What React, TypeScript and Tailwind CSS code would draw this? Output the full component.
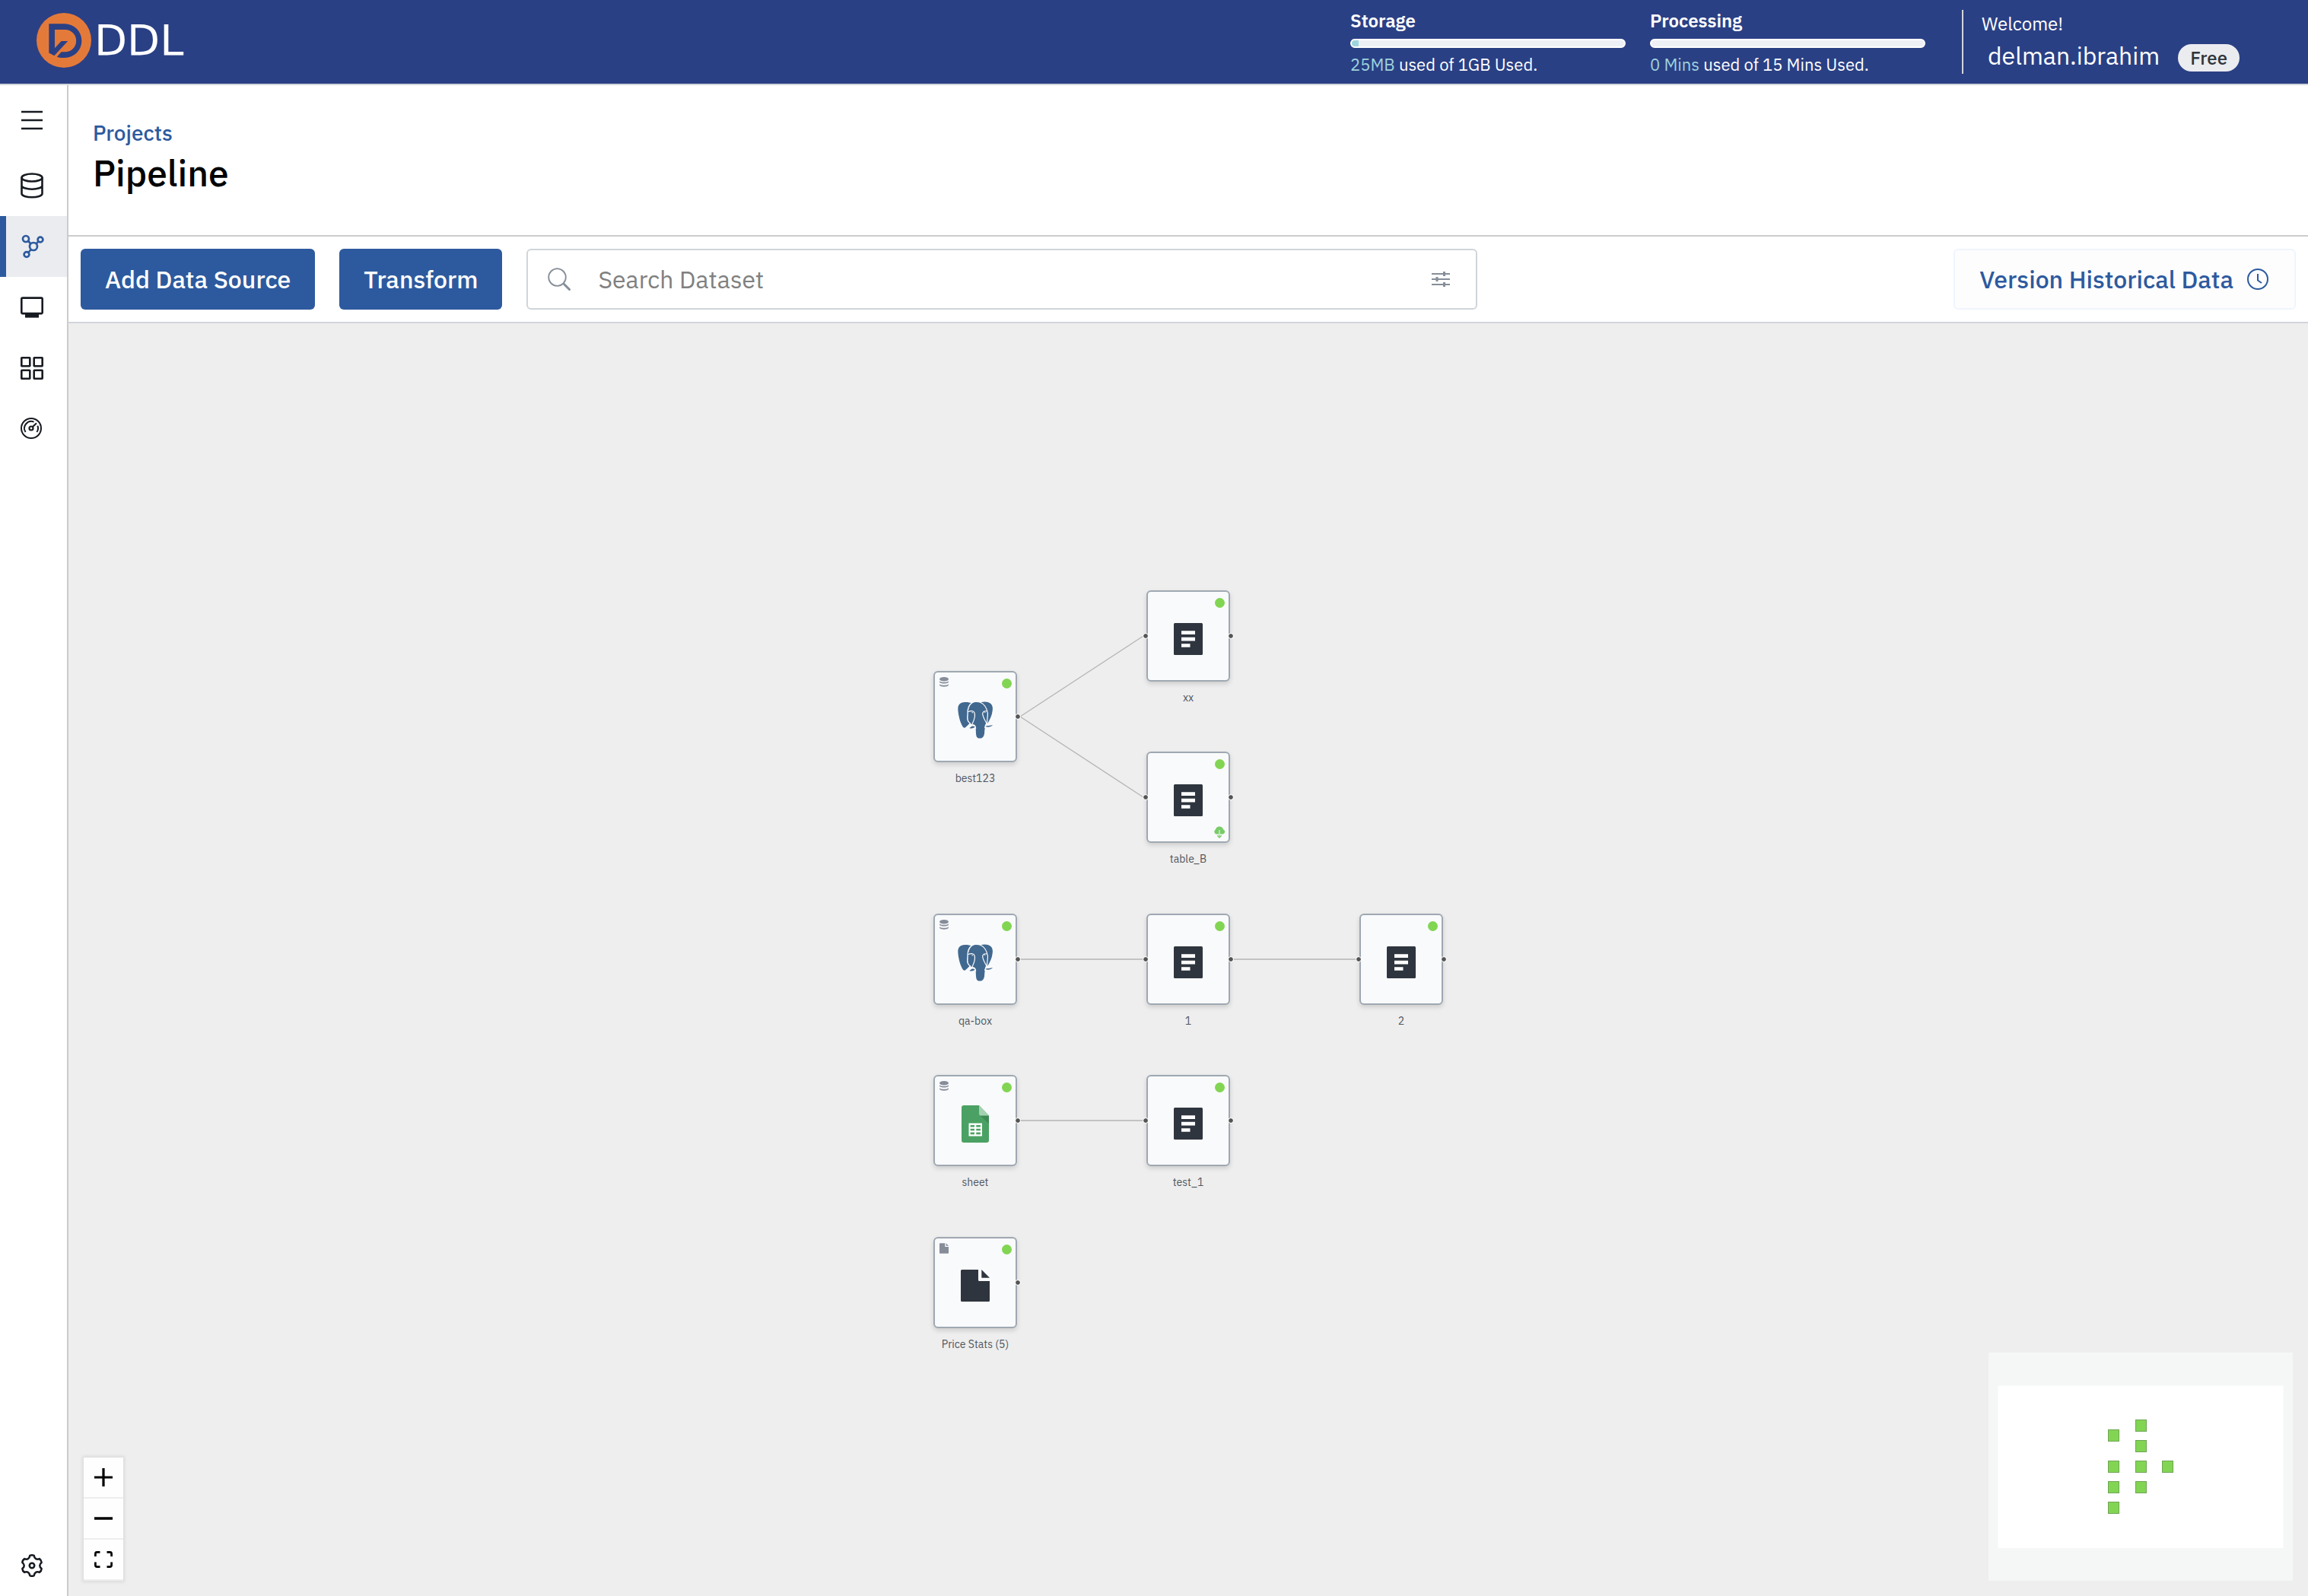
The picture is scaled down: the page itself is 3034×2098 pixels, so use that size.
import React from "react";

type IconProps = { className?: string };

/* ---------- Brand ---------- */

function Logo() {
  return (
    <a href="#home" className="mb-1 flex items-center gap-1" aria-label="DDL home">
      <svg viewBox="0 0 72 72" className="size-[72px]" aria-hidden="true">
        <circle cx="36" cy="36" r="36" fill="#e47a3a" />
        <path
          d="M16.300 14.300H37A22.300 22.300 0 0 1 37 59C32.500 59.200 29.500 58.900 26.800 57.700L32.600 51.300H37.500A14.600 14.600 0 0 0 37.500 22H24V46.200L32.600 37H41.200L23.300 56.300L16.300 52.500Z"
          fill="#2a4085"
        />
      </svg>
      <span className="font-['DejaVu_Sans',sans-serif] text-[56px] leading-none text-white">DDL</span>
    </a>
  );
}

/* ---------- Icons ---------- */

function MenuIcon() {
  return (
    <svg viewBox="0 0 28 28" className="size-7" stroke="#171b21" strokeWidth="2.6" aria-hidden="true">
      <path d="M0 3H28M0 14H28M0 25H28" />
    </svg>
  );
}

function DatabaseIcon() {
  return (
    <svg viewBox="0 0 30 34" className="h-[34px] w-[30px]" fill="none" stroke="#171b21" strokeWidth="2.6" aria-hidden="true">
      <ellipse cx="15" cy="6.500" rx="13.500" ry="5" />
      <path d="M1.500 6.500V27.500C1.500 30.200 7.500 32.300 15 32.300S28.500 30.200 28.500 27.500V6.500M1.500 17C1.500 19.600 7.500 21.700 15 21.700S28.500 19.600 28.500 17" />
    </svg>
  );
}

function NetworkIcon() {
  return (
    <svg viewBox="0 0 30 32" className="h-8 w-[30px]" fill="none" stroke="#2d5a9e" strokeWidth="2.700" aria-hidden="true">
      <circle cx="6" cy="6" r="4" />
      <circle cx="25" cy="7" r="3.400" />
      <circle cx="16" cy="16" r="5" />
      <circle cx="7" cy="26.500" r="3.400" />
      <path d="M9 8.600L12.400 12.500M22.500 9.300L19.500 12.500M9.300 24L12.700 20" />
    </svg>
  );
}

function MonitorIcon() {
  return (
    <svg viewBox="0 0 30 28" className="h-7 w-[30px]" aria-hidden="true">
      <rect x="1.300" y="1.600" width="27.400" height="20.500" rx="1.500" fill="none" stroke="#171b21" strokeWidth="2.600" />
      <path d="M6 23H24V27.600H6Z" fill="#171b21" />
    </svg>
  );
}

function GridIcon() {
  return (
    <svg viewBox="0 0 30 30" className="size-[30px]" fill="none" stroke="#171b21" strokeWidth="2.600" aria-hidden="true">
      <rect x="1.300" y="1.300" width="11" height="11" rx="0.500" />
      <rect x="17.700" y="1.300" width="11" height="11" rx="0.500" />
      <rect x="1.300" y="17.700" width="11" height="11" rx="0.500" />
      <rect x="17.700" y="17.700" width="11" height="11" rx="0.500" />
    </svg>
  );
}

function GaugeIcon() {
  return (
    <svg viewBox="1 1 30 30" className="size-[30px]" fill="none" stroke="#171b21" strokeWidth="2" aria-hidden="true">
      <circle cx="15" cy="15" r="13" />
      <circle cx="15" cy="15" r="2.500" strokeWidth="2.200" />
      <path d="M17 13L22 8.300" strokeWidth="2.200" />
      <path d="M7.600 20A9 9 0 0 1 18.600 6.700M23.400 11.600A9 9 0 0 1 22.400 20" />
    </svg>
  );
}

function gearOutline(cx: number, cy: number) {
  const point = (radius: number, degrees: number) => {
    const a = (degrees * Math.PI) / 180;
    return `${(cx + radius * Math.cos(a)).toFixed(2)} ${(cy + radius * Math.sin(a)).toFixed(2)}`;
  };
  let d = `M${point(13.3, -102)}`;
  for (let i = 0; i < 6; i++) {
    const mid = -90 + i * 60;
    d += `Q${point(14.4, mid)} ${point(13.3, mid + 12)}`;
    d += `C${point(9.6, mid + 20)} ${point(9.6, mid + 40)} ${point(13.3, mid + 48)}`;
  }
  return d + "Z";
}

function SettingsIcon() {
  return (
    <svg viewBox="0 0 30 30" className="size-[30px]" fill="none" stroke="#171b21" strokeLinejoin="round" aria-hidden="true">
      <path d={gearOutline(15, 15)} strokeWidth="2.500" />
      <circle cx="15" cy="15" r="3.200" strokeWidth="2.600" />
    </svg>
  );
}

function SearchIcon() {
  return (
    <svg viewBox="0 0 30 30" className="size-[30px]" fill="none" stroke="#868e99" strokeLinecap="round" aria-hidden="true">
      <circle cx="12.500" cy="12.500" r="11.300" strokeWidth="1.800" />
      <path d="M21.500 21.500L28.500 28.500" strokeWidth="3" />
    </svg>
  );
}

function FilterIcon() {
  return (
    <svg viewBox="0 0 24 20" className="h-5 w-6" stroke="#868e99" strokeWidth="2" aria-hidden="true">
      <path d="M0 3H24M0 10H24M0 17H24" />
      <path d="M16.500 0V6M7 7V13M16.500 14V20" strokeWidth="3" />
    </svg>
  );
}

function ClockIcon() {
  return (
    <svg viewBox="0 0 28 28" className="size-7" fill="none" stroke="#2d5a9e" strokeWidth="2" aria-hidden="true">
      <circle cx="14" cy="14" r="13" />
      <path d="M14 7V15.500L19 19" />
    </svg>
  );
}

function StackIcon() {
  return (
    <svg viewBox="0 0 12 13" className="h-[13px] w-3" fill="#868d98" aria-hidden="true">
      <ellipse cx="6" cy="2.800" rx="6" ry="2.800" />
      <path d="M0 5.200C1.500 7.300 10.500 7.300 12 5.200V6.800C11 9.200 1 9.200 0 6.800ZM0 9.200C1.500 11.300 10.500 11.300 12 9.200V10.600C11 13.600 1 13.600 0 10.600Z" />
    </svg>
  );
}

function FileIcon({ className }: IconProps) {
  return (
    <svg viewBox="0 0 38 42" className={className} fill="currentColor" aria-hidden="true">
      <path d="M1.500 0H23V13.500Q23 15 24.500 15H38V40.500Q38 42 36.500 42H1.500Q0 42 0 40.500V1.500Q0 0 1.500 0Z" />
      <path d="M27.300 0L38 10.800H27.300Z" />
    </svg>
  );
}

function TableIcon() {
  return (
    <svg viewBox="0 0 38 42" className="h-[42px] w-[38px]" aria-hidden="true">
      <rect width="38" height="42" rx="1.500" fill="#2f353e" />
      <path d="M10 10.300H28V15H10ZM10 18.800H28V23.400H10ZM10 27.200H21.500V31.800H10Z" fill="#fff" />
    </svg>
  );
}

function SheetIcon() {
  return (
    <svg viewBox="0 0 36 49" className="h-[49px] w-9" aria-hidden="true">
      <path d="M3 0H23L36 13.500V46Q36 49 33 49H3Q0 49 0 46V3Q0 0 3 0Z" fill="#4ba163" />
      <path d="M24.500 13.500H36V24Z" fill="#3d8a55" />
      <path d="M23 0L36 13.500H25.500Q23 13.500 23 11Z" fill="#a3d1b1" />
      <path
        d="M9.500 23.500H27V40.500H9.500ZM11.600 26V28.600H17V26ZM19.300 26V28.600H24.900V26ZM11.600 30.700V33.300H17V30.700ZM19.300 30.700V33.300H24.900V30.700ZM11.600 35.500V38.200H17V35.500ZM19.300 35.500V38.200H24.900V35.500Z"
        fill="#fff"
        fillRule="evenodd"
      />
    </svg>
  );
}

function ElephantIcon() {
  return (
    <svg viewBox="0 0 138 145" className="h-[49px] w-[46px]" strokeLinejoin="round" aria-hidden="true">
      <g fill="#41688f">
        <path d="M54 6C46 3 38 1 28 2C8 3 0 14 1 32C2 50 8 76 16 92C20 101 26 106 31 101L47 86C40 80 37 72 39 62C42 50 38 38 44 22C46 15 49 10 54 6Z" />
        <path d="M90 3C104 -1 118 -1 129 7C137 13 139 24 137 36C135 54 128 70 117 86L112 82L116 50L110 24Z" />
        <path d="M50 102C54 94 62 96 68 98C67 104 54 108 46 104Z" />
        <path d="M113 95C122 97 130 92 138 93C132 99 120 102 111 99Z" />
        <path d="M45 24C50 8 60 2 73 2C96 2 112 15 116 38C119 55 114 66 114 84C108 90 108 100 106 112C105 122 106 132 100 139C94 146 80 147 75 139C71 132 72 118 71 104C70 94 66 90 60 90C50 90 40 78 40 64C42 50 39 38 45 24Z" />
      </g>
      <g fill="none" stroke="#f9fafc" strokeWidth="3.600">
        <path d="M56 4C42 14 38 34 39 48C36 70 38 80 50 86L38 100" />
        <path d="M88 2C106 10 114 24 118 44C120 60 113 76 116 92" />
        <path d="M41 40C50 35 64 36 66 44C71 60 64 74 58 86L54 94C64 90 71 94 71 106" />
        <path d="M115 38C108 36 100 38 98 46C98 60 108 74 114 86C108 92 108 98 107 104" />
      </g>
      <path d="M54 42L61 42L58 46ZM104 42L110 41L108 45Z" fill="#f9fafc" />
    </svg>
  );
}

function CloudIcon() {
  return (
    <svg viewBox="0 0 16 16" className="size-4" aria-hidden="true">
      <path d="M3.500 10.500A3.500 3.500 0 0 1 3 4.200A5.200 5.200 0 0 1 13 4.200A3.300 3.300 0 0 1 12.600 10.500Z" fill="#78cc68" />
      <path d="M8 5V11.500" stroke="#d9f2d4" strokeWidth="1.300" />
      <path d="M8 11.500V13.500M5.300 12.200L8 15L10.700 12.200" stroke="#78cc68" strokeWidth="1.400" fill="none" />
    </svg>
  );
}

/* ---------- Header ---------- */

function Meter({ title, used, rest, percent }: { title: string; used: string; rest: string; percent: number }) {
  return (
    <section className="w-[362px]">
      <h2 className="text-2xl leading-7 font-semibold">{title}</h2>
      <div
        role="progressbar"
        aria-label={title}
        aria-valuenow={percent}
        className="mt-2.5 h-3 overflow-hidden rounded-full border-2 border-white bg-[#edf0f5]"
      >
        <div className="h-full bg-[#9ed5dd]" style={{ width: `${percent}%` }} />
      </div>
      <p className="mt-2 text-[22px] leading-7">
        <span className="text-[#9ed3dc]">{used}</span> {rest}
      </p>
    </section>
  );
}

function Header() {
  return (
    <header className="flex h-28 items-center justify-between border-b-2 border-[#d3d6da] bg-[#2a4085] pr-[90px] pl-12 text-white">
      <Logo />
      <div className="flex items-center">
        <div className="flex gap-8 pt-0.5">
          <Meter title="Storage" used="25MB" rest="used of 1GB Used." percent={2.5} />
          <Meter title="Processing" used="0 Mins" rest="used of 15 Mins Used." percent={0} />
        </div>
        <div className="ml-12 flex h-[84px] flex-col border-l-2 border-[#d3d6da] pt-0.5 pl-6">
          <p className="text-2xl leading-8">Welcome!</p>
          <div className="mt-1.5 flex items-baseline gap-6 pl-2">
            <span className="text-[32px] leading-10">delman.ibrahim</span>
            <span className="rounded-full bg-[#ebecf0] px-4 text-2xl leading-9 font-medium text-[#2f363d]">Free</span>
          </div>
        </div>
      </div>
    </header>
  );
}

/* ---------- Sidebar ---------- */

const navItems = [
  { label: "Data sources", icon: <DatabaseIcon />, active: false },
  { label: "Pipeline", icon: <NetworkIcon />, active: true },
  { label: "Monitor", icon: <MonitorIcon />, active: false },
  { label: "Apps", icon: <GridIcon />, active: false },
  { label: "Dashboard", icon: <GaugeIcon />, active: false },
];

function Sidebar() {
  return (
    <nav className="flex w-[90px] shrink-0 flex-col border-r-2 border-[#cccccc] bg-white" aria-label="Main">
      <button type="button" aria-label="Toggle menu" className="flex h-[92px] items-center pl-7">
        <MenuIcon />
      </button>
      {navItems.map((item) => (
        <a
          key={item.label}
          href="#nav"
          aria-label={item.label}
          className={
            item.active
              ? "flex h-20 items-center border-l-8 border-[#2d5a9e] bg-[#ebecf0] pl-5"
              : "flex h-20 items-center pl-[27px]"
          }
        >
          {item.icon}
        </a>
      ))}
      <a href="#settings" aria-label="Settings" className="mt-auto flex h-20 items-center pl-[27px]">
        <SettingsIcon />
      </a>
    </nav>
  );
}

/* ---------- Toolbar ---------- */

function Toolbar() {
  return (
    <div className="flex items-center gap-8 border-b-2 border-[#d1d5da] bg-white p-4 text-[32px]">
      <button type="button" className="h-20 rounded-md bg-[#2d5a9e] px-8 font-medium whitespace-nowrap text-white">
        Add Data Source
      </button>
      <button type="button" className="h-20 rounded-md bg-[#2d5a9e] px-8 font-medium whitespace-nowrap text-white">
        Transform
      </button>
      <label className="flex h-20 w-[1250px] items-center rounded-md border-2 border-[#d0d5da] pr-[34px] pl-[26px]">
        <SearchIcon />
        <input
          type="text"
          aria-label="Search Dataset"
          placeholder="Search Dataset"
          className="ml-9 min-w-0 flex-1 bg-transparent outline-none placeholder:text-[#808080]"
        />
        <FilterIcon />
      </label>
      <button
        type="button"
        className="ml-auto flex h-20 items-center gap-[18px] rounded-md border-2 border-[#eff5fe] bg-[#fdfdfe] pr-[34px] pl-8 font-medium whitespace-nowrap text-[#2d5a9e]"
      >
        Version Historical Data
        <ClockIcon />
      </button>
    </div>
  );
}

/* ---------- Pipeline canvas ---------- */

type Kind = "postgres" | "sheet" | "file" | "table";
type PipelineNode = { label: string; kind: Kind; x: number; y: number; cloud?: boolean };

const nodes: PipelineNode[] = [
  { label: "best123", kind: "postgres", x: 1137, y: 457 },
  { label: "xx", kind: "table", x: 1417, y: 351 },
  { label: "table_B", kind: "table", x: 1417, y: 563, cloud: true },
  { label: "qa-box", kind: "postgres", x: 1137, y: 776 },
  { label: "1", kind: "table", x: 1417, y: 776 },
  { label: "2", kind: "table", x: 1697, y: 776 },
  { label: "sheet", kind: "sheet", x: 1137, y: 988 },
  { label: "test_1", kind: "table", x: 1417, y: 988 },
  { label: "Price Stats (5)", kind: "file", x: 1137, y: 1201 },
];

const edges: [number, number][] = [
  [0, 1],
  [0, 2],
  [3, 4],
  [4, 5],
  [6, 7],
];

const kindIcon: Record<Kind, React.ReactNode> = {
  postgres: <ElephantIcon />,
  sheet: <SheetIcon />,
  file: <FileIcon className="h-[42px] w-[38px] text-[#2f353e]" />,
  table: <TableIcon />,
};

function NodeCard({ node }: { node: PipelineNode }) {
  return (
    <div className="absolute w-[110px]" style={{ left: node.x, top: node.y }}>
      <div className="relative flex h-[120px] items-center justify-center rounded-md border-2 border-[#9fa8b2] bg-[#f9fafc] pt-2 shadow-[0_3px_6px_rgba(0,0,0,0.14)]">
        {kindIcon[node.kind]}
        {node.kind !== "table" && (
          <span className="absolute top-1.5 left-1.5">
            {node.kind === "file" ? <FileIcon className="h-3.5 w-3 text-[#868d98]" /> : <StackIcon />}
          </span>
        )}
        <span className="absolute top-2 right-[5px] size-[13px] rounded-full bg-[#82d553]" />
        {node.cloud && (
          <span className="absolute right-1 bottom-1">
            <CloudIcon />
          </span>
        )}
        {node.kind === "table" && (
          <span className="absolute top-[55px] -left-[6px] size-1.5 rounded-full bg-[#555555] outline-1 outline-white" />
        )}
        <span className="absolute top-[55px] -right-[6px] size-1.5 rounded-full bg-[#555555] outline-1 outline-white" />
      </div>
      <p className="mt-[11px] text-center text-sm leading-5 whitespace-nowrap text-[#4f5762]">{node.label}</p>
    </div>
  );
}

function ZoomControls() {
  return (
    <div className="absolute bottom-5 left-5 flex flex-col shadow-[0_0_4px_2px_rgba(0,0,0,0.08)]">
      <button type="button" aria-label="Zoom in" className="flex h-[54px] w-[52px] items-center justify-center border-b-2 border-[#eeeeee] bg-[#fefefe]">
        <svg viewBox="0 0 24 24" className="size-6" stroke="#000" strokeWidth="3.200" aria-hidden="true">
          <path d="M0 12H24M12 0V24" />
        </svg>
      </button>
      <button type="button" aria-label="Zoom out" className="flex h-[54px] w-[52px] items-center justify-center border-b-2 border-[#eeeeee] bg-[#fefefe]">
        <svg viewBox="0 0 24 24" className="size-6" stroke="#000" strokeWidth="3.500" aria-hidden="true">
          <path d="M0 12H24" />
        </svg>
      </button>
      <button type="button" aria-label="Fit view" className="flex h-[54px] w-[52px] items-center justify-center border-b-2 border-[#eeeeee] bg-[#fefefe]">
        <svg viewBox="0 0 24 22" className="h-[22px] w-6" fill="none" stroke="#000" strokeWidth="2.700" aria-hidden="true">
          <path d="M1.400 7V3.500Q1.400 1.400 3.500 1.400H7.500M16.500 1.400H20.500Q22.600 1.400 22.600 3.500V7M22.600 14.500V18.500Q22.600 20.600 20.500 20.600H16.500M7.500 20.600H3.500Q1.400 20.600 1.400 18.500V14.500" />
        </svg>
      </button>
    </div>
  );
}

function MiniMap() {
  return (
    <svg viewBox="0 0 400 300" className="absolute right-5 bottom-5 h-[300px] w-[400px] bg-[#f4f7f6]" role="img" aria-label="Mini map">
      <rect x="12.500" y="43.500" width="375" height="213.500" fill="#fff" />
      {nodes.map((node) => (
        <rect
          key={node.label}
          x={157.5 + Math.round(((node.x - 1137) * 71) / 560)}
          y={88.5 + Math.round(((node.y - 351) * 108) / 850)}
          width="14"
          height="15"
          fill="#82d553"
          stroke="#6fa556"
        />
      ))}
    </svg>
  );
}

function Canvas() {
  return (
    <main className="relative min-h-[1400px] flex-1 overflow-hidden bg-[#eeeeee]">
      <svg className="absolute inset-0 size-full" stroke="#b4b4b6" strokeWidth="1.300" aria-hidden="true">
        {edges.map(([from, to]) => (
          <line
            key={`${from}-${to}`}
            x1={nodes[from].x + 114}
            y1={nodes[from].y + 60}
            x2={nodes[to].x - 4}
            y2={nodes[to].y + 60}
          />
        ))}
      </svg>
      {nodes.map((node) => (
        <NodeCard key={node.label} node={node} />
      ))}
      <ZoomControls />
      <MiniMap />
    </main>
  );
}

export default function App() {
  return (
    <div className="flex min-h-screen flex-col bg-white font-['IBM_Plex_Sans','Roboto',sans-serif]">
      <Header />
      <div className="flex flex-1">
        <Sidebar />
        <div className="flex min-w-0 flex-1 flex-col">
          <div className="border-b-2 border-[#cccccc] pt-[45px] pb-[52px] pl-8">
            <a href="#projects" className="block text-[28px] leading-9 font-medium text-[#2d5a9e]">
              Projects
            </a>
            <h1 className="mt-1 text-5xl leading-[60px] font-medium text-black">Pipeline</h1>
          </div>
          <Toolbar />
          <Canvas />
        </div>
      </div>
    </div>
  );
}
